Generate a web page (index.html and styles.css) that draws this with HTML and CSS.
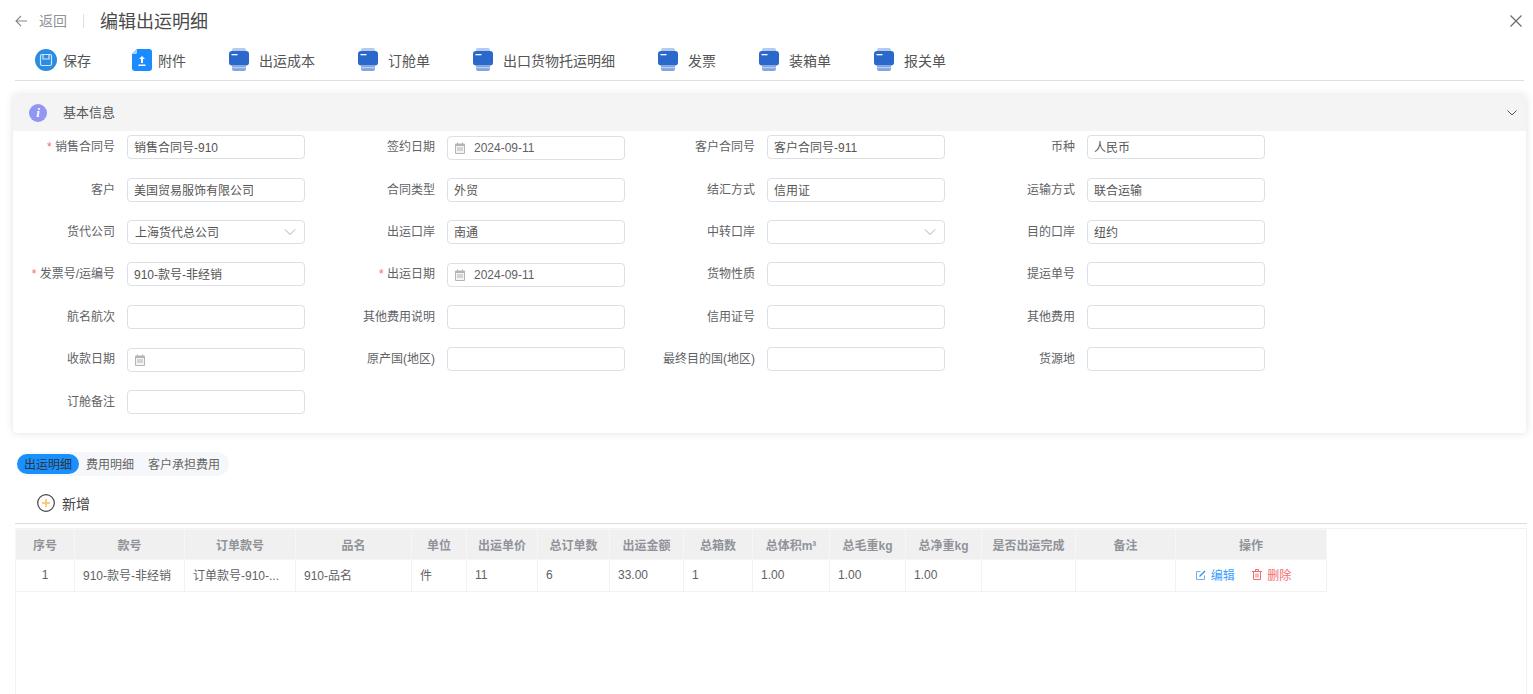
FILE: index.html
```html
<!DOCTYPE html>
<html lang="en">

<head>
    <meta charset="UTF-8">
    <title>编辑出运明细</title>
    <link rel="stylesheet" href="styles.css">
</head>

<body>
    <svg class="defs" width="0" height="0">
        <symbol id="printer" viewBox="0 0 20 23">
            <path d="M5 0h10a2 2 0 0 1 2 2v3H3V2a2 2 0 0 1 2-2z" fill="#b4caee"/>
            <rect x="0" y="3" width="20" height="14.500" rx="3" fill="#2a68cc"/>
            <rect x="2.500" y="6" width="6" height="1.300" fill="#fff"/>
            <path d="M3 17.500h14V21a2 2 0 0 1-2 2H5a2 2 0 0 1-2-2z" fill="#7fa6e3"/>
            <path d="M3 19.200h14v1H3z" fill="#c8d9f4"/>
        </symbol>
        <symbol id="calendar" viewBox="0 0 12 12">
            <path d="M1.500 2h9v9.500h-9z" fill="#f4f4f4" stroke="#b5b5b5"/>
            <path d="M1.500 2h9v2h-9z" fill="#b5b5b5"/>
            <path d="M3.500 0.500v2M8.500 0.500v2M3 6h6M3 8h6" stroke="#b5b5b5" fill="none"/>
        </symbol>
        <symbol id="chevron" viewBox="0 0 12 12">
            <path d="M1 3.500l5 5 5-5" fill="none" stroke="#a8abb2" stroke-width="1"/>
        </symbol>
    </svg>

    <header class="page-head">
        <svg class="back-icon" width="12" height="12" viewBox="0 0 12 12">
            <path d="M12 6H1M6 1L1 6l5 5" fill="none" stroke="#888" stroke-width="1.100"/>
        </svg>
        <span class="back-text">返回</span>
        <span class="head-line"></span>
        <h1 class="page-title">编辑出运明细</h1>
        <svg class="close-icon" width="12" height="12" viewBox="0 0 12 12">
            <path d="M0.500 0.500l11 11M11.500 0.500l-11 11" fill="none" stroke="#666" stroke-width="1.100"/>
        </svg>
    </header>

    <nav class="toolbar">
        <a class="tool tool-save">
            <svg width="22" height="22" viewBox="0 0 22 22">
                <circle cx="11" cy="11" r="11" fill="#2a8de2"/>
                <rect x="5.500" y="5.500" width="11" height="11" rx="1.500" fill="none" stroke="#cfe5fa" stroke-width="1.200"/>
                <path d="M8 5.500v4.500h6V5.500" fill="none" stroke="#cfe5fa" stroke-width="1.200"/>
            </svg>
            <span>保存</span>
        </a>
        <a class="tool">
            <svg width="20" height="22" viewBox="0 0 20 22">
                <path d="M5 0h12a3 3 0 0 1 3 3v16a3 3 0 0 1-3 3H3a3 3 0 0 1-3-3V5z" fill="#1a8cff"/>
                <path d="M5 0v3.500a1.500 1.500 0 0 1-1.500 1.500H0z" fill="#a9d3ff"/>
                <path d="M10 7l3 3h-2v4H9v-4H7zM6.500 15.500h7V17h-7z" fill="#fff"/>
            </svg>
            <span>附件</span>
        </a>
        <a class="tool tool-print"><svg width="20" height="23"><use href="#printer"/></svg><span>出运成本</span></a>
        <a class="tool tool-print"><svg width="20" height="23"><use href="#printer"/></svg><span>订舱单</span></a>
        <a class="tool tool-print"><svg width="20" height="23"><use href="#printer"/></svg><span>出口货物托运明细</span></a>
        <a class="tool tool-print"><svg width="20" height="23"><use href="#printer"/></svg><span>发票</span></a>
        <a class="tool tool-print"><svg width="20" height="23"><use href="#printer"/></svg><span>装箱单</span></a>
        <a class="tool tool-print"><svg width="20" height="23"><use href="#printer"/></svg><span>报关单</span></a>
    </nav>

    <section class="card">
        <div class="card-head">
            <span class="info-icon">i</span>
            <span class="card-title">基本信息</span>
            <svg class="card-arrow" width="10" height="6" viewBox="0 0 10 6">
                <path d="M0.500 0.500L5 5l4.500-4.500" fill="none" stroke="#555" stroke-width="1"/>
            </svg>
        </div>
        <form class="form-grid">
            <div class="field"><label><i>*</i> 销售合同号</label><div class="input">销售合同号-910</div></div>
            <div class="field"><label>签约日期</label><div class="input date"><svg width="12" height="12"><use href="#calendar"/></svg>2024-09-11</div></div>
            <div class="field"><label>客户合同号</label><div class="input">客户合同号-911</div></div>
            <div class="field"><label>币种</label><div class="input">人民币</div></div>

            <div class="field"><label>客户</label><div class="input">美国贸易服饰有限公司</div></div>
            <div class="field"><label>合同类型</label><div class="input">外贸</div></div>
            <div class="field"><label>结汇方式</label><div class="input">信用证</div></div>
            <div class="field"><label>运输方式</label><div class="input">联合运输</div></div>

            <div class="field"><label>货代公司</label><div class="input select">上海货代总公司<svg width="12" height="12"><use href="#chevron"/></svg></div></div>
            <div class="field"><label>出运口岸</label><div class="input">南通</div></div>
            <div class="field"><label>中转口岸</label><div class="input select"><svg width="12" height="12"><use href="#chevron"/></svg></div></div>
            <div class="field"><label>目的口岸</label><div class="input">纽约</div></div>

            <div class="field"><label><i>*</i> 发票号/运编号</label><div class="input">910-款号-非经销</div></div>
            <div class="field"><label><i>*</i> 出运日期</label><div class="input date"><svg width="12" height="12"><use href="#calendar"/></svg>2024-09-11</div></div>
            <div class="field"><label>货物性质</label><div class="input"></div></div>
            <div class="field"><label>提运单号</label><div class="input"></div></div>

            <div class="field"><label>航名航次</label><div class="input"></div></div>
            <div class="field"><label>其他费用说明</label><div class="input"></div></div>
            <div class="field"><label>信用证号</label><div class="input"></div></div>
            <div class="field"><label>其他费用</label><div class="input"></div></div>

            <div class="field"><label>收款日期</label><div class="input date"><svg width="12" height="12"><use href="#calendar"/></svg></div></div>
            <div class="field"><label>原产国(地区)</label><div class="input"></div></div>
            <div class="field"><label>最终目的国(地区)</label><div class="input"></div></div>
            <div class="field"><label>货源地</label><div class="input"></div></div>

            <div class="field"><label>订舱备注</label><div class="input"></div></div>
        </form>
    </section>

    <div class="tabs">
        <span class="tab active">出运明细</span>
        <span class="tab">费用明细</span>
        <span class="tab">客户承担费用</span>
    </div>

    <div class="add-row">
        <svg width="18" height="18" viewBox="0 0 18 18">
            <circle cx="9" cy="9" r="8.300" fill="#fff" stroke="#444" stroke-width="1.200"/>
            <path d="M9 5v8M5 9h8" stroke="#fbbf5d" stroke-width="1.500"/>
        </svg>
        <span>新增</span>
    </div>

    <div class="table-box">
        <table class="detail-table">
            <colgroup>
                <col class="c59"><col class="c110"><col class="c111"><col class="c116"><col class="c55"><col class="c71"><col class="c72"><col class="c74"><col class="c69"><col class="c77"><col class="c76"><col class="c76"><col class="c94"><col class="c100"><col class="c151">
            </colgroup>
            <thead>
                <tr>
                    <th>序号</th><th>款号</th><th>订单款号</th><th>品名</th><th>单位</th><th>出运单价</th><th>总订单数</th><th>出运金额</th><th>总箱数</th><th>总体积m³</th><th>总毛重kg</th><th>总净重kg</th><th>是否出运完成</th><th>备注</th><th>操作</th>
                </tr>
            </thead>
            <tbody>
                <tr>
                    <td class="center">1</td><td>910-款号-非经销</td><td>订单款号-910-...</td><td>910-品名</td><td>件</td><td>11</td><td>6</td><td>33.00</td><td>1</td><td>1.00</td><td>1.00</td><td>1.00</td><td></td><td></td>
                    <td class="center ops">
                        <a class="link edit">
                            <svg width="10" height="10" viewBox="0 0 10 10"><path d="M8.500 5.500v4h-8v-8h4" fill="none" stroke="#6bb2f7"/><path d="M3.500 6.500L9 1" fill="none" stroke="#2a8de2" stroke-width="1.200"/></svg>编辑</a>
                        <a class="link del">
                            <svg width="10" height="11" viewBox="0 0 10 11"><path d="M0 2.500h10M3.500 2.500v-2h3v2M1.500 2.500v8h7v-8M4 4.500v4M6 4.500v4" fill="none" stroke="#f56c6c"/></svg>删除</a>
                    </td>
                </tr>
            </tbody>
        </table>
    </div>
</body>

</html>
```

FILE: styles.css
```css
* {
    margin: 0;
    padding: 0;
    box-sizing: border-box;
}

html,
body {
    height: 694px;
    overflow: hidden;
}

body {
    background: #fff;
    color: #606266;
    font-family: "Liberation Sans", "Noto Sans CJK SC", sans-serif;
    font-size: 12px;
}

.defs {
    position: absolute;
}

.page-head {
    height: 42px;
    padding: 0 11px 0 15px;
    display: flex;
    align-items: center;
}

.back-text {
    margin-left: 12px;
    margin-bottom: 2px;
    font-size: 14px;
    color: #909399;
}

.head-line {
    width: 1px;
    height: 14px;
    margin: 0 16px;
    background: #dcdfe6;
}

.page-title {
    margin-bottom: 2px;
    font-size: 18px;
    font-weight: 400;
    color: #4a4a4a;
}

.close-icon {
    margin-left: auto;
}

.toolbar {
    height: 39px;
    margin: 0 9px 0 15px;
    padding: 0 0 3px 20px;
    display: flex;
    align-items: center;
    gap: 43px;
    border-bottom: 1px solid #dcdfe6;
}

.tool {
    display: flex;
    align-items: center;
    gap: 6px;
    font-size: 14px;
    color: #555;
}

.tool-save {
    margin-right: -2px;
}

.tool-print {
    gap: 10px;
}

.card {
    height: 338px;
    margin: 14px 7px 0 13px;
    border-radius: 4px;
    box-shadow: 0 0 8px rgba(0, 0, 0, 0.12);
}

.card-head {
    height: 36px;
    padding: 0 9px 0 16px;
    display: flex;
    align-items: center;
    background: #f4f4f4;
}

.info-icon {
    width: 18px;
    height: 18px;
    border-radius: 50%;
    background: #8f96f3;
    color: #fff;
    font: italic bold 13px/18px "Liberation Serif", serif;
    text-align: center;
}

.card-title {
    margin-left: 16px;
    margin-bottom: 3px;
    font-size: 13px;
    color: #555;
}

.card-arrow {
    margin-left: auto;
}

.form-grid {
    padding-top: 4px;
    display: grid;
    grid-template-columns: 292px 320px 320px 320px;
    grid-template-rows: 43px 42px 42px 43px 42px 43px 42px;
}

.field {
    display: flex;
    justify-content: flex-end;
    gap: 12px;
}

.field label {
    line-height: 24px;
    white-space: nowrap;
}

.field label i {
    color: #f56c6c;
    font-style: normal;
}

.input {
    width: 178px;
    height: 24px;
    padding: 0 6px 1px;
    display: flex;
    align-items: center;
    border: 1px solid #dcdfe6;
    border-radius: 4px;
    color: #555;
    background: #fff;
}

.date {
    margin-top: 1px;
    color: #606266;
}

.date svg {
    margin-right: 8px;
}

.select {
    padding-left: 7px;
    justify-content: space-between;
}

.select svg {
    margin-left: auto;
    margin-right: 2px;
}

.tabs {
    width: 212px;
    height: 24px;
    margin: 19px 0 0 17px;
    padding-top: 2px;
    display: flex;
    border-radius: 12px;
    background: #f5f7fa;
    color: #666;
}

.tab {
    height: 20px;
    line-height: 22px;
    padding: 0 7px;
}

.tab.active {
    border-radius: 10px;
    background: #1890ff;
    color: #333;
}

.add-row {
    height: 48px;
    margin: 0 6px 0 15px;
    padding: 6px 0 0 22px;
    display: flex;
    align-items: center;
    gap: 7px;
    border-bottom: 1px solid #dcdcdc;
    font-size: 14px;
    color: #444;
}

.table-box {
    height: 175px;
    margin: 4px 6px 0 15px;
    border: 1px solid #f2f2f2;
    border-width: 1px 1px 0 1px;
}

.detail-table {
    width: 1311px;
    margin-left: -1px;
    border-collapse: collapse;
    table-layout: fixed;
}

.detail-table th {
    height: 30px;
    background: #f0f0f0;
    border: 1px solid #f6f6f6;
    font-weight: 700;
    color: #909399;
}

.detail-table td {
    height: 32px;
    padding: 0 8px 2px;
    border: 1px solid #f2f2f2;
    white-space: nowrap;
    overflow: hidden;
    color: #606266;
}

.detail-table td.center {
    text-align: center;
}

.detail-table td.ops {
    padding-right: 23px;
}

.c59 { width: 59px; }
.c110 { width: 110px; }
.c111 { width: 111px; }
.c116 { width: 116px; }
.c55 { width: 55px; }
.c71 { width: 71px; }
.c72 { width: 72px; }
.c74 { width: 74px; }
.c69 { width: 69px; }
.c77 { width: 77px; }
.c76 { width: 76px; }
.c94 { width: 94px; }
.c100 { width: 100px; }
.c151 { width: 151px; }

.link {
    display: inline-flex;
    align-items: center;
    gap: 5px;
}

.edit {
    color: #409eff;
}

.del {
    margin-left: 14px;
    color: #f56c6c;
}
```
